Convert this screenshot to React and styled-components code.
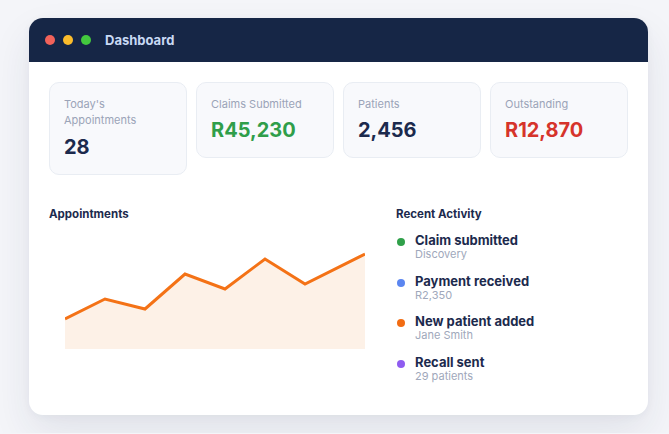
import React from 'react'
import styled, { createGlobalStyle } from 'styled-components'

const GlobalStyle = createGlobalStyle`
  body {
    margin: 0;
    background: #f4f5f9;
    font-family: Inter, "Noto Sans", sans-serif;
  }
`

const Page = styled.div`
  padding: 18px 0 18px 29px;
`

const Window = styled.div`
  width: 619px;
  height: 397px;
  background: #ffffff;
  border-radius: 14px;
  overflow: hidden;
  box-shadow: 0 18px 40px rgba(30, 41, 79, 0.09), 0 2px 8px rgba(30, 41, 79, 0.04);
`

const TitleBar = styled.div`
  height: 44px;
  background: #162646;
  display: flex;
  align-items: center;
  padding-left: 16px;
`

const Dot = styled.span`
  width: 10px;
  height: 10px;
  border-radius: 50%;
  background: ${p => p.color};
  margin-right: 8px;
`

const Title = styled.span`
  margin-left: 6px;
  color: #c8d9f4;
  font-size: 13px;
  font-weight: 700;
`

const Body = styled.div`
  padding: 20px 20px 0 20px;
`

const Stats = styled.div`
  display: grid;
  grid-template-columns: repeat(4, 1fr);
  gap: 9px;
  align-items: start;
`

const StatCard = styled.div`
  background: #f8f9fc;
  border: 1px solid #e9edf3;
  border-radius: 10px;
  padding: 13px 14px;
`

const StatLabel = styled.div`
  font-size: 11px;
  line-height: 16px;
  color: #9ba4b8;
`

const StatValue = styled.div`
  margin-top: ${p => (p.tall ? 5 : 4)}px;
  font-size: 20px;
  line-height: 28px;
  font-weight: 700;
  color: ${p => p.color || '#1c2a4d'};
`

const Lower = styled.div`
  display: grid;
  grid-template-columns: 1fr 232px;
  gap: 16px;
  margin-top: 31px;
`

const Heading = styled.div`
  font-size: 11.5px;
  line-height: 16px;
  font-weight: 700;
  color: #1c2a4d;
`

const ChartWrap = styled.div`
  display: flex;
  justify-content: center;
  margin-top: 27px;
`

const Activity = styled.ul`
  list-style: none;
  margin: 10px 0 0;
  padding: 0;
  display: flex;
  flex-direction: column;
  gap: 11.7px;
`

const Item = styled.li`
  display: flex;
  align-items: flex-start;
`

const Bullet = styled.span`
  width: 8px;
  height: 8px;
  border-radius: 50%;
  background: ${p => p.color};
  margin: 6px 10px 0 1px;
  flex-shrink: 0;
`

const ItemTitle = styled.div`
  font-size: 13px;
  line-height: 16px;
  font-weight: 700;
  color: #1c2a4d;
`

const ItemSub = styled.div`
  font-size: 11px;
  line-height: 13px;
  color: #a0a8bb;
`

const stats = [
  { label: "Today's Appointments", value: '28', tall: true },
  { label: 'Claims Submitted', value: 'R45,230', color: '#2f9e4a' },
  { label: 'Patients', value: '2,456' },
  { label: 'Outstanding', value: 'R12,870', color: '#d6342b' },
]

const activity = [
  { title: 'Claim submitted', sub: 'Discovery', color: '#30a04a' },
  { title: 'Payment received', sub: 'R2,350', color: '#5b86f0' },
  { title: 'New patient added', sub: 'Jane Smith', color: '#f26c12' },
  { title: 'Recall sent', sub: '29 patients', color: '#8f5cf0' },
]

const points = '0,70 40,50 80,60 120,25 160,40 200,10 240,35 300,5'

function Chart () {
  return (
    <svg width="300" height="100" viewBox="0 0 300 100">
      <polygon points={`0,100 ${points} 300,100`} fill="#fdf1e7" />
      <polyline points={points} fill="none" stroke="#f47216" strokeWidth="3" strokeLinejoin="miter" />
    </svg>
  )
}

export default function App () {
  return (
    <Page>
      <GlobalStyle />
      <Window>
        <TitleBar>
          <Dot color="#f2625a" />
          <Dot color="#fbbc2c" />
          <Dot color="#43c93e" />
          <Title>Dashboard</Title>
        </TitleBar>
        <Body>
          <Stats>
            {stats.map(s => (
              <StatCard key={s.label}>
                <StatLabel>{s.label}</StatLabel>
                <StatValue color={s.color} tall={s.tall}>{s.value}</StatValue>
              </StatCard>
            ))}
          </Stats>
          <Lower>
            <div>
              <Heading>Appointments</Heading>
              <ChartWrap>
                <Chart />
              </ChartWrap>
            </div>
            <div>
              <Heading>Recent Activity</Heading>
              <Activity>
                {activity.map(a => (
                  <Item key={a.title}>
                    <Bullet color={a.color} />
                    <div>
                      <ItemTitle>{a.title}</ItemTitle>
                      <ItemSub>{a.sub}</ItemSub>
                    </div>
                  </Item>
                ))}
              </Activity>
            </div>
          </Lower>
        </Body>
      </Window>
    </Page>
  )
}
